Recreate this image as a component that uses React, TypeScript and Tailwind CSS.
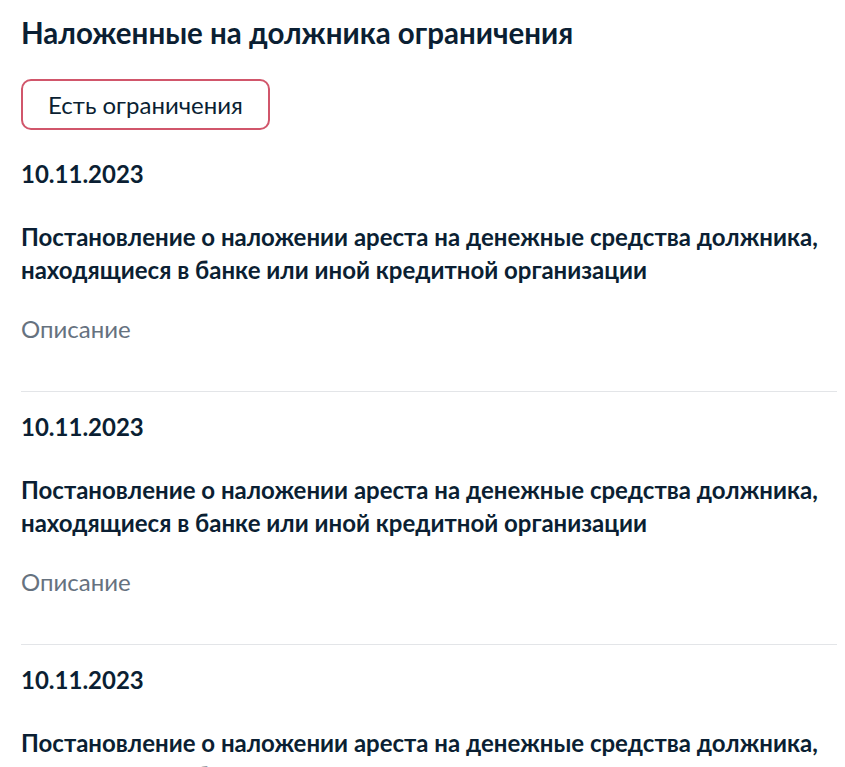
const items = [1, 2, 3];

export default function App() {
  return (
    <div className="min-h-screen bg-white pl-[21px] pr-[8px] pt-[13px] font-['Lato',sans-serif] text-[#0b1f33]">
      <h1 className="text-[29.5px] font-bold leading-[40px]">Наложенные на должника ограничения</h1>
      <div className="mt-[26px] inline-flex h-[51px] items-center rounded-[10px] border-2 border-[#d1566b] px-[25px] text-[24px]">
        Есть ограничения
      </div>
      <div className="mt-[9px]">
        {items.map((i) => (
          <div key={i} className="border-b border-[#e3e5e8] pb-[46px] pt-[19px]">
            <div className="text-[24px] font-bold leading-[32px]">10.11.2023</div>
            <div className="mt-[30px] text-[24px] font-bold leading-[33px]">
              Постановление о наложении ареста на денежные средства должника,
              <br />
              находящиеся в банке или иной кредитной организации
            </div>
            <div className="mt-[27px] text-[24px] leading-[32px] text-[#66727f]">Описание</div>
          </div>
        ))}
      </div>
    </div>
  );
}
